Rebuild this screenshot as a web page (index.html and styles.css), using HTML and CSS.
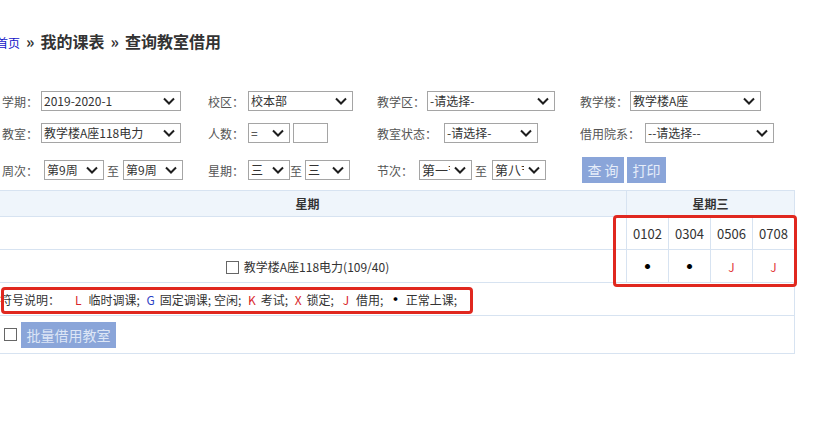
FILE: index.html
```html
<!DOCTYPE html>
<html lang="zh-CN">
<head>
<meta charset="utf-8">
<title>查询教室借用</title>
<link rel="stylesheet" href="styles.css">
</head>
<body>
<div class="page">
  <div class="crumb"><a class="home" href="#">首页</a><span class="sep">»</span>我的课表<span class="sep">»</span>查询教室借用</div>

  <div class="form">
    <div class="row">
      <div class="g g1"><span class="lbl l39">学期：</span><div class="sel w140"><span class="t">2019-2020-1</span><svg viewBox="0 0 12 8"><path d="M1 1.5 L6 6.5 L11 1.5"/></svg></div></div>
      <div class="g g2"><span class="lbl l40">校区：</span><div class="sel w105"><span class="t">校本部</span><svg viewBox="0 0 12 8"><path d="M1 1.5 L6 6.5 L11 1.5"/></svg></div></div>
      <div class="g g3"><span class="lbl l50">教学区：</span><div class="sel w128"><span class="t">-请选择-</span><svg viewBox="0 0 12 8"><path d="M1 1.5 L6 6.5 L11 1.5"/></svg></div></div>
      <div class="g"><span class="lbl l50">教学楼：</span><div class="sel w131"><span class="t">教学楼A座</span><svg viewBox="0 0 12 8"><path d="M1 1.5 L6 6.5 L11 1.5"/></svg></div></div>
    </div>
    <div class="row">
      <div class="g g1"><span class="lbl l39">教室：</span><div class="sel w140"><span class="t">教学楼A座118电力</span><svg viewBox="0 0 12 8"><path d="M1 1.5 L6 6.5 L11 1.5"/></svg></div></div>
      <div class="g g2"><span class="lbl l40">人数：</span><div class="sel w42"><span class="t">=</span><svg viewBox="0 0 12 8"><path d="M1 1.5 L6 6.5 L11 1.5"/></svg></div><span class="inp"></span></div>
      <div class="g g3"><span class="lbl l67">教室状态：</span><div class="sel w94"><span class="t">-请选择-</span><svg viewBox="0 0 12 8"><path d="M1 1.5 L6 6.5 L11 1.5"/></svg></div></div>
      <div class="g"><span class="lbl l65">借用院系：</span><div class="sel w129"><span class="t">--请选择--</span><svg viewBox="0 0 12 8"><path d="M1 1.5 L6 6.5 L11 1.5"/></svg></div></div>
    </div>
    <div class="row r3">
      <div class="g g1"><span class="lbl l42">周次：</span><div class="sel w60"><span class="t">第9周</span><svg viewBox="0 0 12 8"><path d="M1 1.5 L6 6.5 L11 1.5"/></svg></div><span class="to">至</span><div class="sel w60"><span class="t">第9周</span><svg viewBox="0 0 12 8"><path d="M1 1.5 L6 6.5 L11 1.5"/></svg></div></div>
      <div class="g g2"><span class="lbl l40">星期：</span><div class="sel w42"><span class="t">三</span><svg viewBox="0 0 12 8"><path d="M1 1.5 L6 6.5 L11 1.5"/></svg></div><span class="to to-tight">至</span><div class="sel w45"><span class="t">三</span><svg viewBox="0 0 12 8"><path d="M1 1.5 L6 6.5 L11 1.5"/></svg></div></div>
      <div class="g g3"><span class="lbl l42">节次：</span><div class="sel w53"><span class="t">第一节</span><svg viewBox="0 0 12 8"><path d="M1 1.5 L6 6.5 L11 1.5"/></svg></div><span class="to to-wide">至</span><div class="sel w54"><span class="t">第八节</span><svg viewBox="0 0 12 8"><path d="M1 1.5 L6 6.5 L11 1.5"/></svg></div></div>
      <div class="g btns"><span class="btn b-query">查 询</span><span class="btn b-print">打印</span></div>
    </div>
  </div>

  <table class="grid">
    <colgroup><col class="c-main"><col class="c-sec"><col class="c-sec"><col class="c-sec"><col class="c-sec"></colgroup>
    <tr class="h26">
      <th>星期</th>
      <th colspan="4">星期三</th>
    </tr>
    <tr class="h33">
      <td></td>
      <td class="num">0102</td><td class="num">0304</td><td class="num">0506</td><td class="num">0708</td>
    </tr>
    <tr class="h33">
      <td class="room"><span class="cb"></span>教学楼A座118电力(109/40)</td>
      <td class="dot">•</td><td class="dot">•</td><td class="jj">J</td><td class="jj">J</td>
    </tr>
    <tr class="h33">
      <td colspan="5" class="legend">符号说明：<span class="mk red first">L</span>临时调课; <span class="mk blue">G</span>固定调课; 空闲; <span class="mk red k">K</span>考试; <span class="mk red">X</span>锁定; <span class="mk red jm">J</span>借用; <span class="blk">•</span> 正常上课;</td>
    </tr>
    <tr class="h38">
      <td colspan="5" class="batch"><div class="batch-in"><span class="cb"></span><span class="btn b-batch">批量借用教室</span></div></td>
    </tr>
  </table>

  <div class="mark mark-slots"></div>
  <div class="mark mark-legend"></div>
</div>
</body>
</html>
```

FILE: styles.css
```css
* { box-sizing: border-box; }
html, body { margin: 0; padding: 0; background: #fff; }
body {
  font-family: "Noto Sans CJK SC", "Noto Sans", sans-serif;
  font-size: 12px;
  color: #333;
}
.page {
  position: relative;
  margin-left: -12px;
  width: 842px;
  height: 434px;
}
.crumb {
  height: 51px;
  padding: 31px 0 0 8px;
  line-height: 20px;
  font-size: 16px;
  font-weight: bold;
  color: #333;
  white-space: nowrap;
}
.crumb .home {
  font-size: 12px;
  font-weight: normal;
  color: #1414c8;
  text-decoration: none;
}
.crumb .sep { margin: 0 6px; font-weight: bold; }

.form { margin-top: 40px; padding-left: 14px; }
.row { display: flex; align-items: center; height: 20px; }
.row + .row { margin-top: 12px; }
.row.r3 { height: 26px; margin-top: 14px; }
.g { display: flex; align-items: center; }
.g1 { width: 206px; }
.g2 { width: 169px; }
.g3 { width: 203px; }
.lbl { color: #555; white-space: nowrap; flex: none; }
.l39 { width: 39px; }
.l40 { width: 40px; }
.l42 { width: 42px; }
.l50 { width: 50px; }
.l65 { width: 65px; }
.l67 { width: 67px; }

.sel {
  display: flex;
  align-items: center;
  flex: none;
  height: 20px;
  border: 1px solid #a5a5a5;
  background: #fff;
  padding-left: 2px;
  color: #333;
  font-size: 12px;
}
.sel .t { flex: 1; overflow: hidden; white-space: nowrap; line-height: 18px; }
.sel svg { flex: none; width: 12px; height: 8px; margin: 0 5px 0 4px; }
.sel path { fill: none; stroke: #1e1e1e; stroke-width: 2; }
.w42 { width: 42px; }
.w45 { width: 45px; }
.w53 { width: 53px; }
.w54 { width: 54px; }
.w60 { width: 60px; }
.w94 { width: 94px; }
.w105 { width: 105px; }
.w128 { width: 128px; }
.w129 { width: 129px; }
.w131 { width: 131px; }
.w140 { width: 140px; }
.w53 .t, .w54 .t { font-size: 13px; }
.inp {
  flex: none;
  width: 35px;
  height: 20px;
  margin-left: 3px;
  border: 1px solid #a5a5a5;
  background: #fff;
}
.to { flex: none; color: #555; margin: 0 4px 0 3px; }
.to-tight { margin: 0 3px 0 0; }
.to-wide { margin: 0 5px 0 3px; }

.btns { padding-left: 2px; }
.btn {
  display: inline-block;
  height: 26px;
  line-height: 26px;
  background: #8aa5d9;
  color: #e6edf9;
  font-size: 14px;
  text-align: center;
  white-space: nowrap;
}
.b-query { width: 42px; }
.b-print { width: 39px; margin-left: 3px; }

.grid {
  border-collapse: collapse;
  table-layout: fixed;
  width: 806px;
  margin-top: 7px;
}
.c-main { width: 638px; }
.c-sec { width: 42px; }
.grid th, .grid td {
  border: 1px solid #d7e3f1;
  padding: 0;
  text-align: center;
  vertical-align: middle;
}
.grid th {
  background: #eff5fb;
  font-weight: bold;
  color: #333;
  font-size: 12px;
}
.h26 { height: 26px; }
.h33 { height: 33px; }
.h38 { height: 38px; }
.num { font-size: 13px; color: #333; }
.grid td.dot { font-size: 20px; line-height: 12px; color: #000; font-weight: bold; }
.jj { color: #e23a3a; font-size: 12px; }
.room { color: #333; }
.cb {
  display: inline-block;
  width: 13px;
  height: 13px;
  border: 1px solid #666;
  background: #fff;
  vertical-align: -2px;
  margin-right: 5px;
}
.grid td.legend {
  text-align: left;
  padding-left: 11px;
  white-space: nowrap;
}
.mk { margin: 0 5px 0 4px; }
.mk.first { margin-left: 15px; margin-right: 7px; }
.mk.jm { margin-left: 6px; margin-right: 7px; }
.red { color: #d9262a; }
.blue { color: #2b3fc4; }
.blk { color: #000; font-weight: bold; font-size: 15px; line-height: 12px; margin-left: 2px; }
.grid td.batch { text-align: left; padding-left: 15px; }
.batch-in { display: flex; align-items: center; }
.batch-in .cb { margin-right: 4px; }
.b-batch { width: 95px; color: #dde6f6; }

.mark {
  position: absolute;
  border: 3px solid #e0281f;
  border-radius: 4px;
}
.mark-slots { left: 625px; top: 215px; width: 184px; height: 72px; }
.mark-legend { left: 13px; top: 287px; width: 472px; height: 27px; }
```
